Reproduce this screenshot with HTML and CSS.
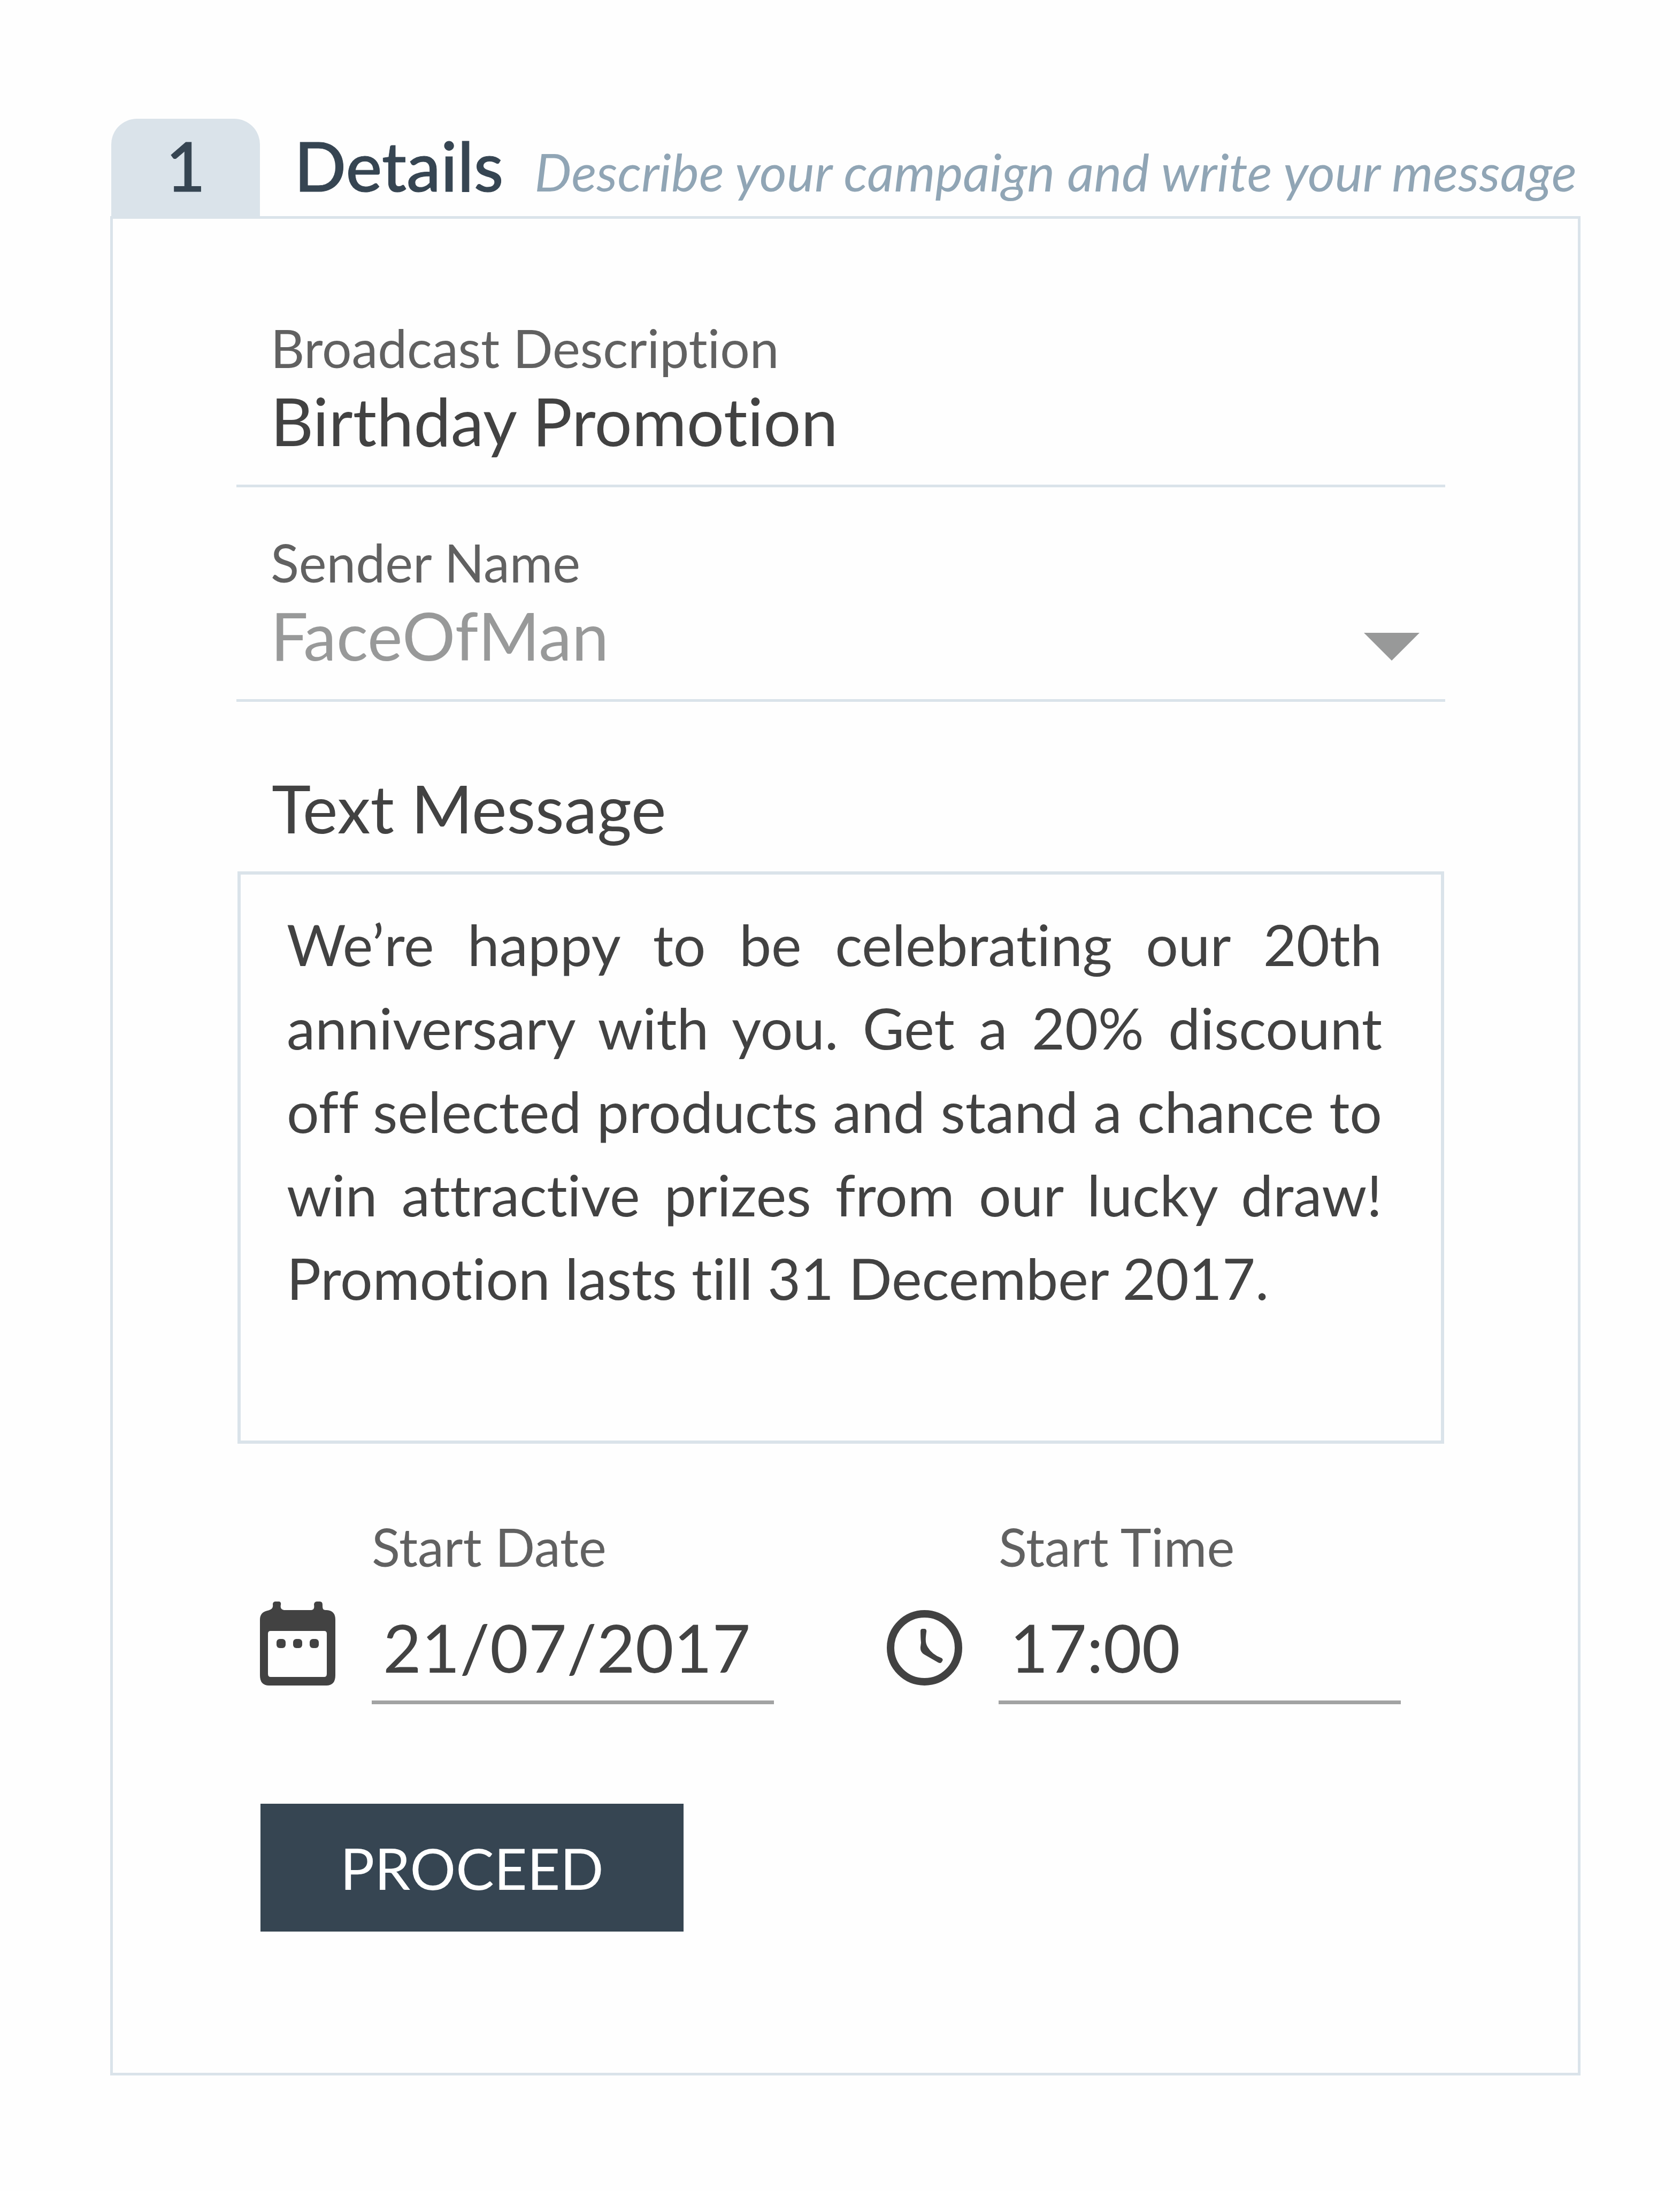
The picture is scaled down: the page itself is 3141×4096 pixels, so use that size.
FILE: index.html
```html
<!DOCTYPE html>
<html lang="en">
<head>
  <meta charset="UTF-8">
  <title>Broadcast Details</title>
  <meta name="viewport" content="width=device-width, initial-scale=1.0">
  <link rel="stylesheet" href="styles.css">
</head>
<body>
  <!-- Step header -->
  <header class="step-header">
    <span class="step-number">1</span>
    <h1>Details</h1>
    <p class="step-hint">Describe your campaign and write your message</p>
  </header>

  <form class="panel">
    <div class="field">
      <label for="description">Broadcast Description</label>
      <input type="text" id="description" value="Birthday Promotion">
    </div>

    <div class="field">
      <label for="sender">Sender Name</label>
      <select id="sender">
        <option>FaceOfMan</option>
      </select>
      <svg class="arrow" viewBox="0 0 104 52" aria-hidden="true"><path d="M0 0H104L52 52Z"/></svg>
    </div>

    <!-- Message -->
    <div class="message">
      <label for="message">Text Message</label>
      <textarea id="message" rows="6">We’re happy to be celebrating our 20th anniversary with you. Get a 20% discount off selected products and stand a chance to win attractive prizes from our lucky draw! Promotion lasts till 31 December 2017.</textarea>
    </div>

    <!-- Date and time -->
    <div class="schedule">
      <div class="when">
        <svg class="icon" viewBox="0 0 141 157" aria-hidden="true">
          <path fill-rule="evenodd" d="M28 0H36Q40 1 39 6C38 11 39 15 45 16H96C101 15 102 12 101 5Q102 0 107 0H112Q117 0 117 6C117 12 117 16 123 16H125Q141 17 141 34V138Q141 157 124 157H17Q0 157 0 138V34Q0 20 14 17C22 15 25 12 24 5Q24 1 28 0ZM20 55Q15 55 15 60V135Q15 141 20 141H120Q125 141 125 135V60Q125 55 120 55Z"/>
          <rect x="31" y="70" width="17" height="17" rx="6"/>
          <rect x="62" y="70" width="17" height="17" rx="6"/>
          <rect x="93" y="70" width="17" height="17" rx="6"/>
        </svg>
        <div class="when-field">
          <label for="startDate">Start Date</label>
          <input type="text" id="startDate" value="21/07/2017">
        </div>
      </div>
      <div class="when">
        <svg class="icon" viewBox="0 0 141 141" aria-hidden="true">
          <circle class="ring" cx="70.5" cy="70.5" r="63.5"/>
          <path d="M63 39Q63 35 67 35H71Q75 36 74 41C72 56 72 62 77 70Q85 83 101 89Q106 91 104 95L102 98Q100 100 96 98L70 83Q62 78 63 69L64 61Q63 52 63 39Z"/>
        </svg>
        <div class="when-field">
          <label for="startTime">Start Time</label>
          <input type="text" id="startTime" value="17:00">
        </div>
      </div>
    </div>

    <button type="button" class="proceed">PROCEED</button>
  </form>
</body>
</html>
```
FILE: styles.css
```css
/* Base Styles */
* {
  box-sizing: border-box;
}
body {
  margin: 0;
  padding: 222px 186px 210px 206px;
  font-family: Lato, sans-serif;
  font-variant-ligatures: none;
  background-color: #fefefe;
  color: #424242;
}
input, select, textarea, button {
  display: block;
  width: 100%;
  margin: 0;
  padding: 0;
  border: none;
  border-radius: 0;
  outline: none;
  background: none;
  font-family: inherit;
  font-variant-ligatures: none;
  color: inherit;
}
/* Step Header */
.step-header {
  display: flex;
  align-items: baseline;
  padding-left: 2px;
  line-height: 174px;
  color: #364552;
}
.step-number {
  width: 278px;
  height: 182px;
  border-radius: 48px 48px 0 0;
  background-color: #dae3ea;
  text-align: center;
}
.step-number, h1 {
  font-size: 128px;
  font-weight: 500;
  -webkit-text-stroke: 1px #364552; /* Slightly heavier */
}
h1 {
  margin: 0 0 0 64px;
}
.step-hint {
  margin: 0 0 0 58px;
  font-size: 98px;
  line-height: 116px;
  font-style: italic;
  white-space: nowrap;
  color: #90a5b5;
}
/* Panel */
.panel {
  padding: 183px 248px 264px 231px;
  border: 5px solid #dae3ea;
}
label {
  display: block;
  font-size: 98px;
  line-height: 116px;
  color: #616161;
}
input, select {
  height: 148px;
  font-size: 124px;
  line-height: 148px;
}
/* Underlined Fields */
.field {
  position: relative;
  margin-bottom: 82px;
  padding: 0 64px 46px;
  border-bottom: 5px solid #dae3ea;
}
.field label {
  margin-bottom: 4px;
}
.field select {
  appearance: none;
  color: #989999;
}
.arrow {
  position: absolute;
  right: 48px;
  bottom: 72px;
  width: 104px;
  fill: #989999;
  pointer-events: none;
}
/* Message */
.message {
  margin: 124px 2px 0;
}
.message label {
  margin-bottom: 45px;
  padding-left: 64px;
  font-size: 124px;
  line-height: 148px;
  color: #424242;
}
.message textarea {
  padding: 52px 110px 70px 86px;
  border: 6px solid #dae3ea;
  font-size: 107px;
  line-height: 156px;
  text-align: justify;
  resize: none;
  overflow: hidden;
}
/* Date and Time */
.schedule {
  display: grid;
  grid-template-columns: 1fr 1fr;
  gap: 211px;
  margin-top: 134px;
  padding: 0 83px 0 44px;
}
.when {
  display: flex;
  align-items: flex-end;
  gap: 68px;
}
.icon {
  flex: none;
  width: 141px;
  margin-bottom: 35px;
  fill: #424242;
}
.ring {
  fill: none;
  stroke: #424242;
  stroke-width: 14px;
}
.when-field {
  flex: 1;
}
.when-field input {
  height: 237px;
  padding: 56px 0 26px 21px;
  border-bottom: 7px solid #a2a3a3;
}
/* Button */
.proceed {
  width: auto;
  margin: 186px 0 0 45px;
  padding: 54px 149px;
  background-color: #364552;
  font-size: 107px;
  line-height: 131px;
  color: #FFFFFF;
  cursor: pointer;
}
```
